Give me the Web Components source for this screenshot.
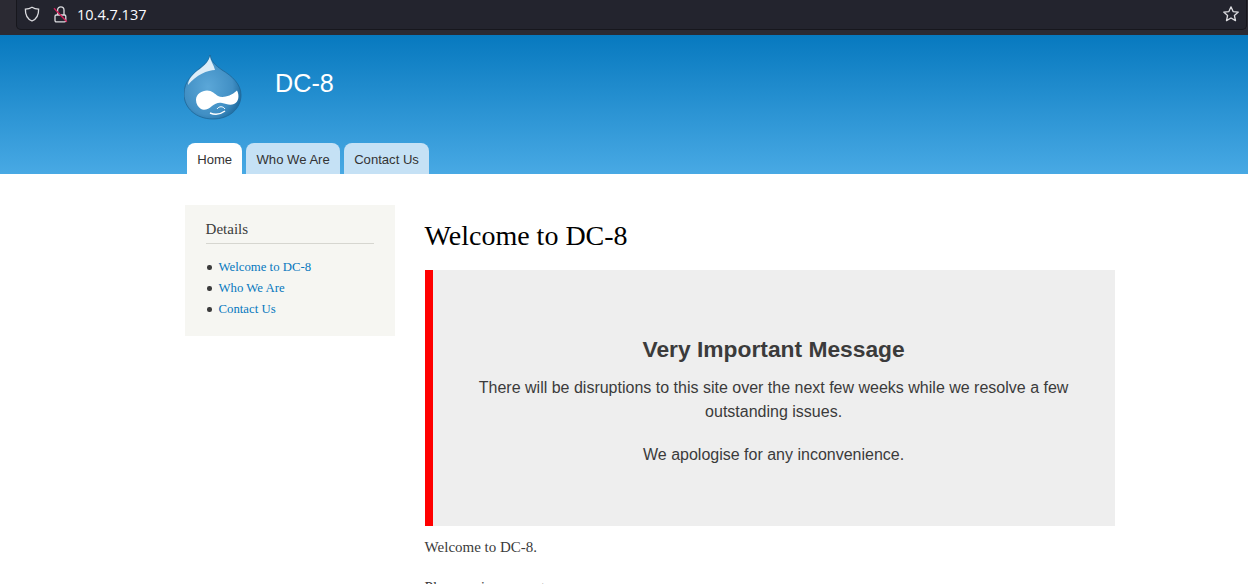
<!DOCTYPE html>
<html>
<head>
<meta charset="utf-8">
<title>DC-8</title>
<style>
    html, body { margin: 0; height: 584px; overflow: hidden; background: #fff; }
</style>
</head>
<body>
<browser-bar url="10.4.7.137"></browser-bar>
<site-header name="DC-8">
    <nav-tab active>Home</nav-tab>
    <nav-tab>Who We Are</nav-tab>
    <nav-tab>Contact Us</nav-tab>
</site-header>
<page-main>
    <side-block slot="side" heading="Details">
        <side-item>Welcome to DC-8</side-item>
        <side-item>Who We Are</side-item>
        <side-item>Contact Us</side-item>
    </side-block>
    <notice-box heading="Very Important Message">
        <p>There will be disruptions to this site over the next few weeks while we resolve a few outstanding issues.</p>
        <p>We apologise for any inconvenience.</p>
    </notice-box>
    <p class="body">Welcome to DC-8.</p>
    <p class="body">Please enjoy your stay.</p>
</page-main>

<script>
    // Firefox style address bar
    class BrowserBar extends HTMLElement {
        constructor() {
            super();
            const url = this.getAttribute('url');
            this.attachShadow({mode: 'open'}).innerHTML = `
            <style>
                :host { display: block; height: 35px; background: #2b2a33; box-sizing: border-box; padding: 0 1px 5px 16px; }
                .box {
                    height: 30px; box-sizing: border-box; background: #23242e;
                    border: 1px solid #17171d; border-top: 0; border-radius: 0 0 5px 5px;
                    display: flex; align-items: center; padding: 0 6px 1px 7px;
                    color: #fbfbfe; font: 14.5px "Open Sans", sans-serif;
                }
                .shield { margin-right: 13px; }
                .lock { margin-right: 8px; }
                .url { flex: 1; }
            </style>
            <div class="box">
                <svg class="shield" width="16" height="16" viewBox="0 0 16 16" fill="none" stroke="#dcdce0" stroke-width="1.3"><path d="M8 1.2 C10 2.4 12.5 3 14.6 3.2 C14.8 8.8 12.6 13 8 15 C3.4 13 1.2 8.8 1.4 3.2 C3.5 3 6 2.4 8 1.2Z"/></svg>
                <svg class="lock" width="16" height="17" viewBox="0 0 16 17" fill="none"><path d="M4.6 9 V4 A3.2 3.2 0 0 1 11 4 V9" stroke="#dcdce0" stroke-width="1.3"/><rect x="2" y="9" width="10.8" height="6.8" rx="1.3" stroke="#dcdce0" stroke-width="1.3"/><path d="M1 2.3 L13.8 15.7" stroke="#d0215a" stroke-width="1.4"/></svg>
                <span class="url">${url}</span>
                <svg width="18" height="18" viewBox="0 0 18 18" fill="none" stroke="#dcdce0" stroke-width="1.3" stroke-linejoin="round"><path d="M9 1.8 L11.1 6.6 L16.3 7.1 L12.4 10.5 L13.5 15.6 L9 13 L4.5 15.6 L5.6 10.5 L1.7 7.1 L6.9 6.6Z"/></svg>
            </div>
            `;
        }
    }
    customElements.define('browser-bar', BrowserBar);

    class SiteHeader extends HTMLElement {
        constructor() {
            super();
            const name = this.getAttribute('name');
            this.attachShadow({mode: 'open'}).innerHTML = `
            <style>
                :host { display: block; height: 139px; box-sizing: border-box; padding: 20px 0 0 184px; background: linear-gradient(#0779bf, #48a9e4); }
                .brand { display: flex; align-items: flex-start; height: 88px; }
                .name { margin: 14px 0 0 33px; font: 25.2px/28px "Liberation Sans", sans-serif; color: #fff; }
                nav { display: flex; gap: 4px; padding-left: 3px; }
            </style>
            <div class="brand">
                <svg width="58" height="65" viewBox="0 0 58 65">
                    <defs>
                        <radialGradient id="drop" cx="0.42" cy="0.5" r="0.62">
                            <stop offset="0" stop-color="#5ba7d8"/>
                            <stop offset="0.7" stop-color="#418fc4"/>
                            <stop offset="1" stop-color="#1c6a9f"/>
                        </radialGradient>
                    </defs>
                    <path d="M26 0 C27 6 31 10 38 15 C48 21 57 29 57 40 C57 54 45 64 29 64 C12 64 0 53 0 39 C0 26 9 19 16 13 C21 9 25 6 26 0Z" fill="url(#drop)" stroke="#1f6696" stroke-width=".8"/>
                    <path d="M26 1 C26 5 30 10 31 15 C24 15 12 20 4 30 C4 24 10 18 16 14 C21 10 25 6 26 1Z" fill="#dcedf8"/>
                    <path d="M12 45 C12 39 18 35.5 23 35.5 C28 35.5 31 39 34 41 C38 43 46 42 53 35.5 C55.5 40 55 47 50 49 C46 50.5 42 49 38 48 C34 47 31 49 28 51 C25 54 20 56 17 54 C14 52 12 49 12 45Z" fill="#fff"/>
                    <path d="M33 54 C35 51 39 51 41 54" stroke="#fff" stroke-width="1" fill="none"/>
                    <path d="M26 58 C31 60 37 59 41 56" stroke="#fff" stroke-width="1.4" fill="none"/>
                </svg>
                <div class="name">${name}</div>
            </div>
            <nav><slot></slot></nav>
            `;
        }
    }
    customElements.define('site-header', SiteHeader);

    class NavTab extends HTMLElement {
        constructor() {
            super();
            this.attachShadow({mode: 'open'}).innerHTML = `
            <style>
                :host { display: block; height: 31px; box-sizing: border-box; padding: 0 10.2px; border-radius: 8px 8px 0 0; background: #c5e1f5; color: #333; font: 13.1px/33px "Liberation Sans", sans-serif; }
                :host([active]) { background: #fff; }
            </style>
            <slot></slot>
            `;
        }
    }
    customElements.define('nav-tab', NavTab);

    class PageMain extends HTMLElement {
        constructor() {
            super();
            this.attachShadow({mode: 'open'}).innerHTML = `
            <style>
                :host { display: flex; gap: 30px; padding: 31px 0 0 184.6px; }
                aside { width: 210px; flex: none; }
                main { width: 690px; flex: none; }
                h1 { margin: 15px 0 18px; font: 28px/32px "Liberation Serif", serif; color: #000; }
                ::slotted(p.body) { margin: 11px 0 20px; font: 15px/20px "Liberation Serif", serif; color: #3b3b3b; }
            </style>
            <aside><slot name="side"></slot></aside>
            <main>
                <h1>Welcome to DC-8</h1>
                <slot></slot>
            </main>
            `;
        }
    }
    customElements.define('page-main', PageMain);

    class SideBlock extends HTMLElement {
        constructor() {
            super();
            const heading = this.getAttribute('heading');
            this.attachShadow({mode: 'open'}).innerHTML = `
            <style>
                :host { display: block; box-sizing: border-box; height: 131px; padding: 15px 21px 0 21px; background: #f6f6f2; font-family: "Liberation Serif", serif; }
                h2 { margin: 0; padding-bottom: 5px; border-bottom: 1px solid #d6d6d0; font: 15px/18px "Liberation Serif", serif; color: #3b3b3b; }
                .list { margin-top: 13px; }
            </style>
            <h2>${heading}</h2>
            <div class="list"><slot></slot></div>
            `;
        }
    }
    customElements.define('side-block', SideBlock);

    class SideItem extends HTMLElement {
        constructor() {
            super();
            this.attachShadow({mode: 'open'}).innerHTML = `
            <style>
                :host { display: flex; align-items: center; height: 21px; color: #0678be; font: 12.75px/21px "Liberation Serif", serif; }
                .dot { width: 4.4px; height: 4.4px; margin: 0 7px 0 1.6px; border-radius: 50%; background: #3b3b3b; flex: none; }
            </style>
            <span class="dot"></span><slot></slot>
            `;
        }
    }
    customElements.define('side-item', SideItem);

    class NoticeBox extends HTMLElement {
        constructor() {
            super();
            const heading = this.getAttribute('heading');
            this.attachShadow({mode: 'open'}).innerHTML = `
            <style>
                :host { display: block; box-sizing: border-box; height: 256px; padding: 66px 40px 0; background: #eee; border-left: 8px solid #f00; text-align: center; color: #3b3b3b; font-family: "Liberation Sans", sans-serif; }
                h2 { margin: 0 0 13px; font: bold 22.8px/27px "Liberation Sans", sans-serif; }
                ::slotted(p) { margin: 0 0 19px; font: 16px/24px "Liberation Sans", sans-serif; }
            </style>
            <h2>${heading}</h2>
            <slot></slot>
            `;
        }
    }
    customElements.define('notice-box', NoticeBox);
</script>
</body>
</html>
